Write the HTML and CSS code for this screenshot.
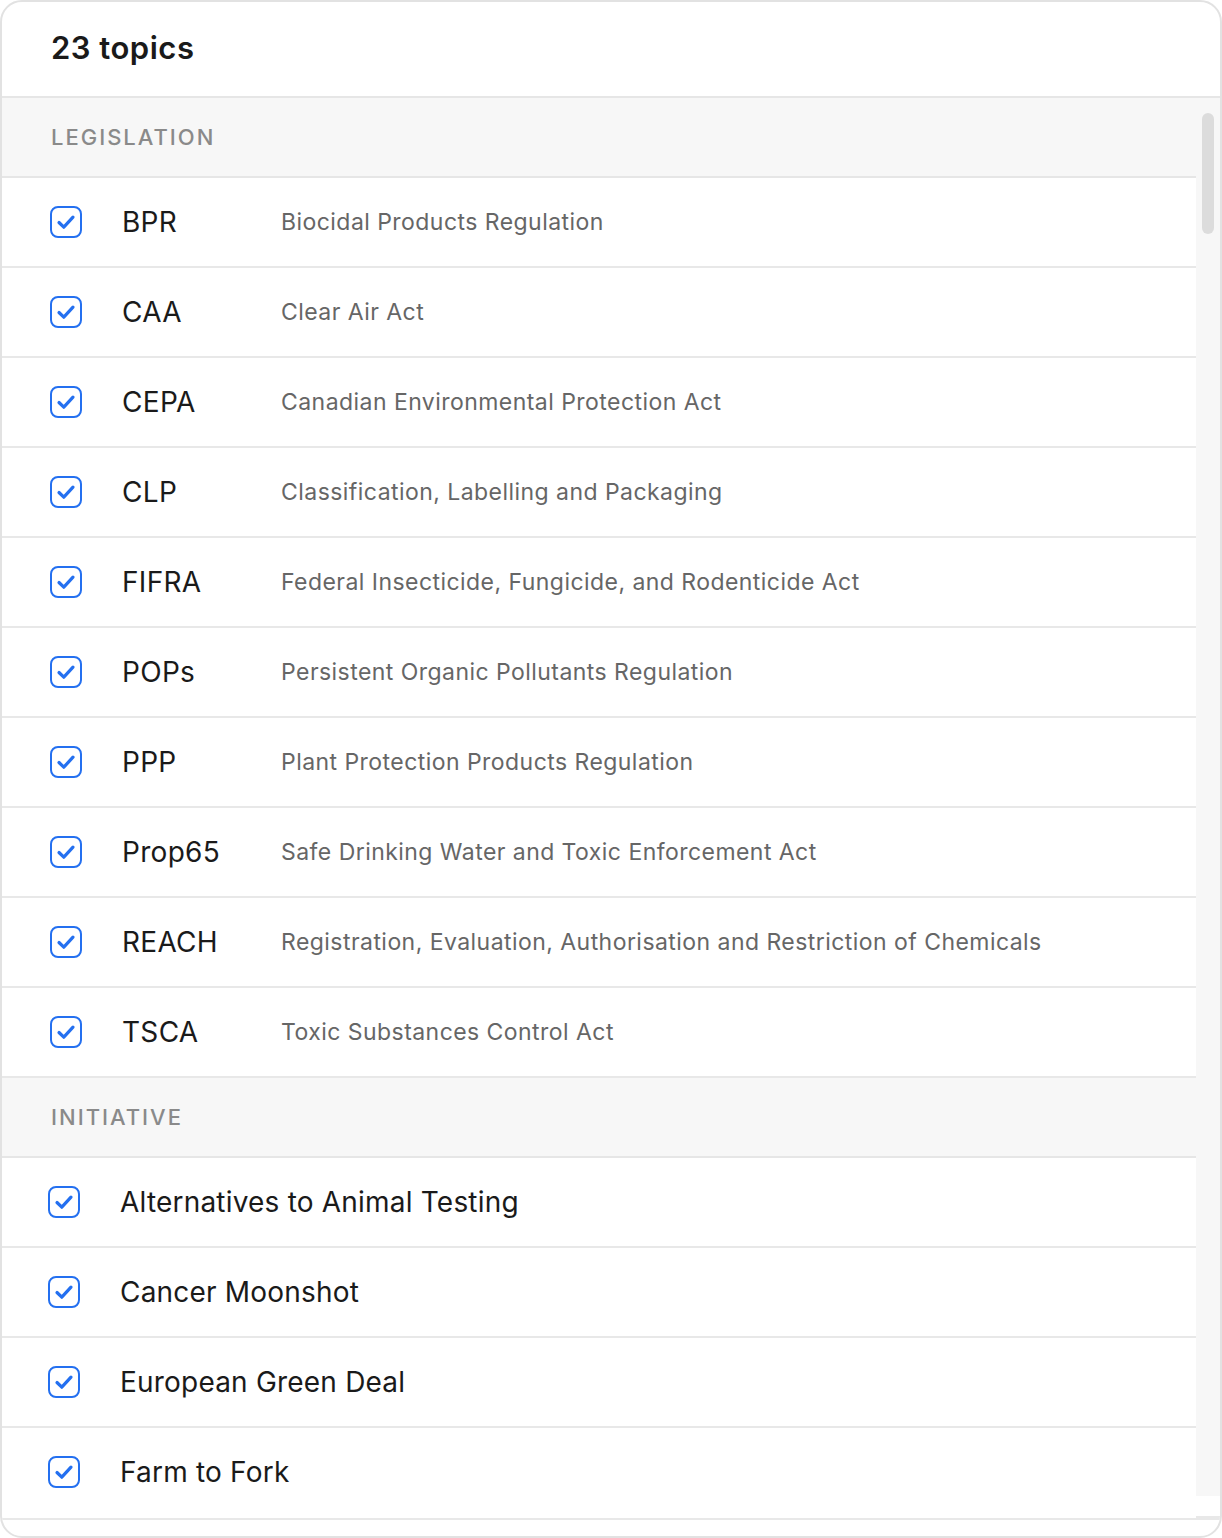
FILE: index.html
```html
<!DOCTYPE html>
<html lang="en">
<head>
<meta charset="utf-8">
<title>23 topics</title>
<link rel="stylesheet" href="styles.css">
</head>
<body>
<div class="card">
  <div class="card-header"><h1 class="title">23 topics</h1></div>
  <div class="card-body">
    <div class="list">
      <div class="group-header">LEGISLATION</div>
      <div class="row">
        <span class="cb"><svg viewBox="0 0 32 32" width="32" height="32"><rect x="1" y="1" width="30" height="30" rx="7"/><path d="M9 16.5 L13.8 21.2 L23 11.2"/></svg></span>
        <span class="code">BPR</span><span class="desc">Biocidal Products Regulation</span>
      </div>
      <div class="row">
        <span class="cb"><svg viewBox="0 0 32 32" width="32" height="32"><rect x="1" y="1" width="30" height="30" rx="7"/><path d="M9 16.5 L13.8 21.2 L23 11.2"/></svg></span>
        <span class="code">CAA</span><span class="desc">Clear Air Act</span>
      </div>
      <div class="row">
        <span class="cb"><svg viewBox="0 0 32 32" width="32" height="32"><rect x="1" y="1" width="30" height="30" rx="7"/><path d="M9 16.5 L13.8 21.2 L23 11.2"/></svg></span>
        <span class="code">CEPA</span><span class="desc">Canadian Environmental Protection Act</span>
      </div>
      <div class="row">
        <span class="cb"><svg viewBox="0 0 32 32" width="32" height="32"><rect x="1" y="1" width="30" height="30" rx="7"/><path d="M9 16.5 L13.8 21.2 L23 11.2"/></svg></span>
        <span class="code">CLP</span><span class="desc">Classification, Labelling and Packaging</span>
      </div>
      <div class="row">
        <span class="cb"><svg viewBox="0 0 32 32" width="32" height="32"><rect x="1" y="1" width="30" height="30" rx="7"/><path d="M9 16.5 L13.8 21.2 L23 11.2"/></svg></span>
        <span class="code">FIFRA</span><span class="desc">Federal Insecticide, Fungicide, and Rodenticide Act</span>
      </div>
      <div class="row">
        <span class="cb"><svg viewBox="0 0 32 32" width="32" height="32"><rect x="1" y="1" width="30" height="30" rx="7"/><path d="M9 16.5 L13.8 21.2 L23 11.2"/></svg></span>
        <span class="code">POPs</span><span class="desc">Persistent Organic Pollutants Regulation</span>
      </div>
      <div class="row">
        <span class="cb"><svg viewBox="0 0 32 32" width="32" height="32"><rect x="1" y="1" width="30" height="30" rx="7"/><path d="M9 16.5 L13.8 21.2 L23 11.2"/></svg></span>
        <span class="code">PPP</span><span class="desc">Plant Protection Products Regulation</span>
      </div>
      <div class="row">
        <span class="cb"><svg viewBox="0 0 32 32" width="32" height="32"><rect x="1" y="1" width="30" height="30" rx="7"/><path d="M9 16.5 L13.8 21.2 L23 11.2"/></svg></span>
        <span class="code">Prop65</span><span class="desc">Safe Drinking Water and Toxic Enforcement Act</span>
      </div>
      <div class="row">
        <span class="cb"><svg viewBox="0 0 32 32" width="32" height="32"><rect x="1" y="1" width="30" height="30" rx="7"/><path d="M9 16.5 L13.8 21.2 L23 11.2"/></svg></span>
        <span class="code">REACH</span><span class="desc">Registration, Evaluation, Authorisation and Restriction of Chemicals</span>
      </div>
      <div class="row">
        <span class="cb"><svg viewBox="0 0 32 32" width="32" height="32"><rect x="1" y="1" width="30" height="30" rx="7"/><path d="M9 16.5 L13.8 21.2 L23 11.2"/></svg></span>
        <span class="code">TSCA</span><span class="desc">Toxic Substances Control Act</span>
      </div>
      <div class="group-header">INITIATIVE</div>
      <div class="row row-init">
        <span class="cb"><svg viewBox="0 0 32 32" width="32" height="32"><rect x="1" y="1" width="30" height="30" rx="7"/><path d="M9 16.5 L13.8 21.2 L23 11.2"/></svg></span>
        <span class="name">Alternatives to Animal Testing</span>
      </div>
      <div class="row row-init">
        <span class="cb"><svg viewBox="0 0 32 32" width="32" height="32"><rect x="1" y="1" width="30" height="30" rx="7"/><path d="M9 16.5 L13.8 21.2 L23 11.2"/></svg></span>
        <span class="name">Cancer Moonshot</span>
      </div>
      <div class="row row-init">
        <span class="cb"><svg viewBox="0 0 32 32" width="32" height="32"><rect x="1" y="1" width="30" height="30" rx="7"/><path d="M9 16.5 L13.8 21.2 L23 11.2"/></svg></span>
        <span class="name">European Green Deal</span>
      </div>
      <div class="row row-init row-last">
        <span class="cb"><svg viewBox="0 0 32 32" width="32" height="32"><rect x="1" y="1" width="30" height="30" rx="7"/><path d="M9 16.5 L13.8 21.2 L23 11.2"/></svg></span>
        <span class="name">Farm to Fork</span>
      </div>
    </div>
    <div class="rail">
      <div class="track"><div class="thumb"></div></div>
    </div>
  </div>
  <div class="card-footer"></div>
</div>
</body>
</html>
```

FILE: styles.css
```css
* { box-sizing: border-box; }
html, body { margin: 0; padding: 0; background: #ffffff; }
body {
  font-family: Inter, "Noto Sans", "Liberation Sans", sans-serif;
  color: #1a1a1a;
}
.card {
  width: 1222px;
  height: 1538px;
  border: 2px solid #e2e2e2;
  border-radius: 22px;
  overflow: hidden;
  display: flex;
  flex-direction: column;
  background: #fff;
}
.card-header {
  height: 96px;
  flex: none;
  border-bottom: 2px solid #e6e6e6;
  display: flex;
  align-items: center;
  padding-left: 49px;
  padding-bottom: 3px;
}
.title {
  margin: 0;
  font-size: 31px;
  font-weight: 600;
  color: #1a1a1a;
  letter-spacing: 0.5px;
}
.card-body {
  flex: none;
  height: 1420px;
  display: flex;
}
.list {
  flex: 1;
  min-width: 0;
}
.group-header {
  height: 80px;
  background: #f7f7f7;
  border-bottom: 2px solid #e6e6e6;
  display: flex;
  align-items: center;
  padding-left: 49px;
  font-size: 22px;
  font-weight: 500;
  letter-spacing: 2px;
  color: #8a8a8a;
}
.row {
  height: 90px;
  border-bottom: 2px solid #e8e8e8;
  display: flex;
  align-items: center;
  padding-left: 48px;
}
.row-last { border-bottom: none; height: 88px; }
.row-init { padding-left: 46px; }
.cb {
  width: 32px;
  height: 32px;
  flex: none;
  display: block;
}
.cb svg { display: block; }
.cb rect { fill: none; stroke: #2470f0; stroke-width: 2; }
.cb path { fill: none; stroke: #2470f0; stroke-width: 3.2; stroke-linecap: round; stroke-linejoin: round; }
.code {
  width: 159px;
  margin-left: 40px;
  flex: none;
  font-size: 28px;
  font-weight: 400;
  letter-spacing: 0.3px;
  color: #1a1a1a;
}
.desc {
  font-size: 23px;
  color: #666666;
  letter-spacing: 0.45px;
}
.name {
  margin-left: 40px;
  font-size: 28px;
  font-weight: 400;
  letter-spacing: 0.2px;
  color: #1a1a1a;
}
.rail {
  width: 24px;
  flex: none;
  display: flex;
  flex-direction: column;
  border-bottom: 2px solid #e8e8e8;
}
.track {
  height: 1398px;
  background: #f7f7f7;
  padding-top: 15px;
  padding-left: 6px;
}
.thumb {
  width: 12px;
  height: 121px;
  border-radius: 6px;
  background: #dcdcdc;
}
.card-footer {
  flex: 1;
  border-top: 2px solid #e8e8e8;
}
```
